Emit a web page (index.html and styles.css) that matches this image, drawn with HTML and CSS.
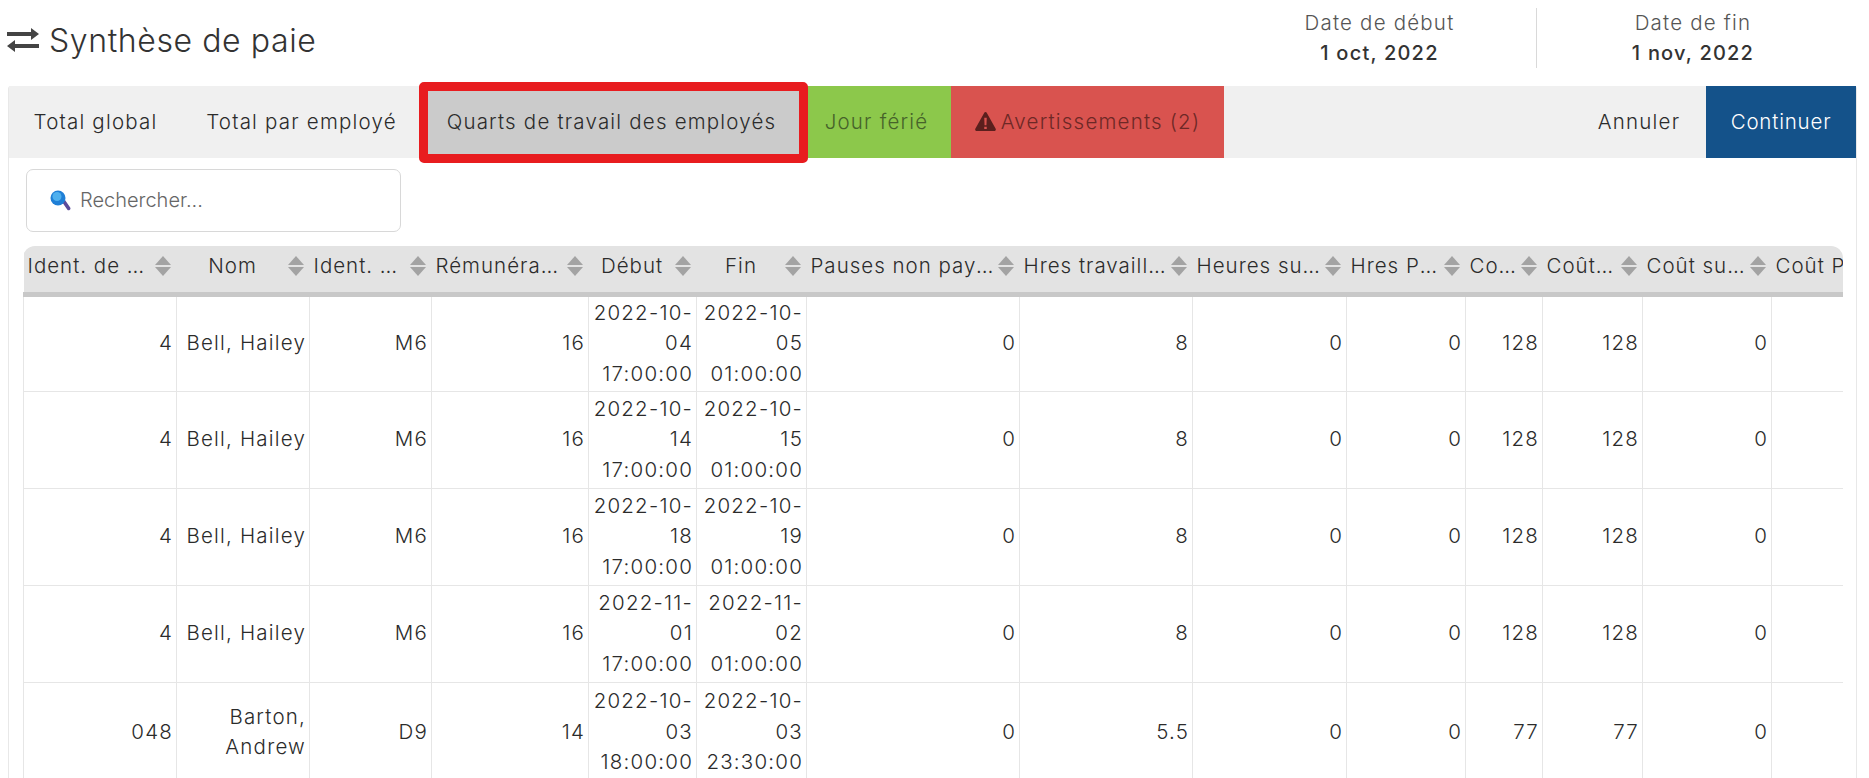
FILE: index.html
```html
<!DOCTYPE html>
<html lang="fr">
<head>
    <meta charset="UTF-8">
    <meta name="viewport" content="width=device-width, initial-scale=1.0">
    <title>Synthèse de paie</title>
    <link rel="stylesheet" href="styles.css">
</head>
<body>
    <header class="page-header">
        <h1 class="page-title">
            <svg class="title-icon" viewBox="0 0 32 24"><path d="M0 4h24V0l8 6-8 6V8H0z M32 16H8v-4l-8 6 8 6v-4h24z"/></svg>
            Synthèse de paie
        </h1>
        <div class="dates">
            <div class="date-block">
                <div class="date-label">Date de début</div>
                <div class="date-value">1 oct, 2022</div>
            </div>
            <div class="date-block date-end">
                <div class="date-label">Date de fin</div>
                <div class="date-value">1 nov, 2022</div>
            </div>
        </div>
    </header>

    <div class="panel">
        <nav class="tabs">
            <div class="tab tab-global">Total global</div>
            <div class="tab tab-employee">Total par employé</div>
            <div class="tab tab-shifts">Quarts de travail des employés</div>
            <div class="tab tab-holiday">Jour férié</div>
            <div class="tab tab-warnings">
                <svg class="warn-icon" viewBox="0 0 20 18"><path d="M10 0c.6 0 1 .3 1.300.8l8.400 15c.5 1-.1 2.200-1.300 2.200H1.600C.4 18-.2 16.800.3 15.800l8.400-15C9 .3 9.400 0 10 0z M8.800 5.500l.3 7h1.800l.3-7z M8.800 14v2.200h2.400V14z" fill-rule="evenodd"/></svg>
                Avertissements (2)
            </div>
            <div class="tab-actions">
                <div class="tab tab-cancel">Annuler</div>
                <div class="tab tab-continue">Continuer</div>
            </div>
        </nav>

        <div class="search-row">
            <div class="search-box">
                <svg class="search-icon" viewBox="0 0 21 21">
                    <path d="M12 12l3-2 5.200 7.500c.6 1 .2 2-.6 2.500-.8.500-1.800.3-2.400-.6z" fill="#5b4b9a"/>
                    <circle cx="8" cy="8" r="7.500" fill="#1f7fd6"/>
                    <circle cx="7" cy="6.500" r="4.500" fill="#4fb0ee"/>
                </svg>
                <span class="search-placeholder">Rechercher...</span>
            </div>
        </div>

        <div class="table-wrap">
            <table class="pay-table">
                <colgroup>
                    <col class="c1"><col class="c2"><col class="c3"><col class="c4"><col class="c5"><col class="c6"><col class="c7">
                    <col class="c8"><col class="c9"><col class="c10"><col class="c11"><col class="c12"><col class="c13"><col class="c14">
                </colgroup>
                <thead>
                    <tr>
                        <th><div class="th-inner"><span class="th-text">Ident. de Employé</span><i class="sort"></i></div></th>
                        <th><div class="th-inner"><span class="th-text center">Nom</span><i class="sort"></i></div></th>
                        <th><div class="th-inner"><span class="th-text">Ident. Du poste</span><i class="sort"></i></div></th>
                        <th><div class="th-inner"><span class="th-text">Rémunération</span><i class="sort"></i></div></th>
                        <th><div class="th-inner"><span class="th-text center">Début</span><i class="sort"></i></div></th>
                        <th><div class="th-inner"><span class="th-text center">Fin</span><i class="sort"></i></div></th>
                        <th><div class="th-inner"><span class="th-text">Pauses non payées</span><i class="sort"></i></div></th>
                        <th><div class="th-inner"><span class="th-text">Hres travaillées</span><i class="sort"></i></div></th>
                        <th><div class="th-inner"><span class="th-text">Heures supp.</span><i class="sort"></i></div></th>
                        <th><div class="th-inner"><span class="th-text">Hres Prime</span><i class="sort"></i></div></th>
                        <th><div class="th-inner"><span class="th-text">Coût total</span><i class="sort"></i></div></th>
                        <th><div class="th-inner"><span class="th-text">Coût régulier</span><i class="sort"></i></div></th>
                        <th><div class="th-inner"><span class="th-text">Coût supp.</span><i class="sort"></i></div></th>
                        <th class="th-last">Coût Prime</th>
                    </tr>
                </thead>
                <tbody>
                    <tr>
                        <td>4</td><td>Bell, Hailey</td><td>M6</td><td>16</td>
                        <td>2022-10-<br>04<br>17:00:00</td><td>2022-10-<br>05<br>01:00:00</td>
                        <td>0</td><td>8</td><td>0</td><td>0</td><td>128</td><td>128</td><td>0</td><td></td>
                    </tr>
                    <tr>
                        <td>4</td><td>Bell, Hailey</td><td>M6</td><td>16</td>
                        <td>2022-10-<br>14<br>17:00:00</td><td>2022-10-<br>15<br>01:00:00</td>
                        <td>0</td><td>8</td><td>0</td><td>0</td><td>128</td><td>128</td><td>0</td><td></td>
                    </tr>
                    <tr>
                        <td>4</td><td>Bell, Hailey</td><td>M6</td><td>16</td>
                        <td>2022-10-<br>18<br>17:00:00</td><td>2022-10-<br>19<br>01:00:00</td>
                        <td>0</td><td>8</td><td>0</td><td>0</td><td>128</td><td>128</td><td>0</td><td></td>
                    </tr>
                    <tr>
                        <td>4</td><td>Bell, Hailey</td><td>M6</td><td>16</td>
                        <td>2022-11-<br>01<br>17:00:00</td><td>2022-11-<br>02<br>01:00:00</td>
                        <td>0</td><td>8</td><td>0</td><td>0</td><td>128</td><td>128</td><td>0</td><td></td>
                    </tr>
                    <tr>
                        <td>048</td><td>Barton,<br>Andrew</td><td>D9</td><td>14</td>
                        <td>2022-10-<br>03<br>18:00:00</td><td>2022-10-<br>03<br>23:30:00</td>
                        <td>0</td><td>5.5</td><td>0</td><td>0</td><td>77</td><td>77</td><td>0</td><td></td>
                    </tr>
                </tbody>
            </table>
        </div>
    </div>
</body>
</html>
```

FILE: styles.css
```css
* {
    margin: 0;
    padding: 0;
    box-sizing: border-box;
}

body, html {
    width: 100%;
    height: 100%;
    overflow: hidden;
    background-color: #fff;
    font-family: Inter, sans-serif;
    font-weight: 300;
    color: #2b2b2b;
}

.page-header {
    display: flex;
    justify-content: space-between;
    height: 86px;
    padding-left: 7px;
    padding-right: 20px;
}

.page-title {
    display: flex;
    align-items: center;
    gap: 10px;
    height: 80px;
    font-size: 32px;
    font-weight: 300;
    letter-spacing: 0.6px;
    color: #333;
}

.title-icon {
    width: 32px;
    height: 24px;
    fill: #444;
}

.dates {
    display: flex;
    padding-top: 8px;
    height: 68px;
}

.date-block {
    width: 313px;
    height: 60px;
    text-align: center;
    letter-spacing: 1.2px;
}

.date-end {
    border-left: 1px solid #d9d9d9;
}

.date-label {
    font-size: 20.5px;
    line-height: 30px;
    color: #555;
}

.date-value {
    font-size: 20px;
    font-weight: 500;
    line-height: 30px;
    color: #333;
}

.panel {
    margin: 0 12px 0 8px;
    height: 700px;
    border: 1px solid #e8e8e8;
    border-top: none;
    border-radius: 3px;
}

.tabs {
    display: flex;
    height: 72px;
    background-color: #f0f0f0;
    font-size: 20.5px;
    letter-spacing: 1.2px;
}

.tab {
    display: flex;
    align-items: center;
    justify-content: center;
    gap: 5px;
    padding-bottom: 2px;
    color: #2b2b2b;
    white-space: nowrap;
}

.tab-global { width: 173px; }
.tab-employee { width: 239px; }

.tab-shifts {
    position: relative;
    width: 381px;
    background-color: #cbcbcb;
}

/* red annotation drawn over the screenshot */
.tab-shifts::after {
    content: "";
    position: absolute;
    top: -4px;
    left: -2px;
    right: -6px;
    bottom: -5px;
    border: 9px solid #e81c1f;
    border-radius: 5px;
}

.tab-holiday {
    width: 149px;
    background-color: #8cc84b;
    color: #46632a;
}

.tab-warnings {
    width: 273px;
    background-color: #d9534f;
    color: #6d2826;
}

.warn-icon {
    width: 21px;
    height: 19px;
    fill: #5b1f1d;
}

.tab-actions {
    display: flex;
    margin-left: auto;
}

.tab-cancel { width: 150px; padding-left: 16px; }

.tab-continue {
    width: 150px;
    background-color: #14528a;
    color: #fff;
    letter-spacing: 0.8px;
}

.search-row {
    padding: 11px 0 14px 17px;
}

.search-box {
    display: flex;
    align-items: center;
    gap: 9px;
    width: 375px;
    height: 63px;
    padding-left: 23px;
    border: 1px solid #d8d8d8;
    border-radius: 7px;
    background-color: #fff;
}

.search-icon {
    width: 21px;
    height: 21px;
}

.search-placeholder {
    margin-bottom: 2px;
    font-size: 20px;
    color: #666;
}

.table-wrap {
    margin-left: 14px;
    width: 1820px;
    overflow: hidden;
    border-radius: 12px 12px 0 0;
}

.pay-table {
    width: 1820px;
    table-layout: fixed;
    border-collapse: collapse;
    font-size: 20.5px;
    letter-spacing: 1.2px;
}

.c1 { width: 153px; }
.c2 { width: 133px; }
.c3 { width: 122px; }
.c4 { width: 157px; }
.c5 { width: 108px; }
.c6 { width: 110px; }
.c7 { width: 213px; }
.c8 { width: 173px; }
.c9 { width: 154px; }
.c10 { width: 119px; }
.c11 { width: 77px; }
.c12 { width: 100px; }
.c13 { width: 129px; }
.c14 { width: 72px; }

.pay-table thead {
    background-color: #e3e3e3;
}

.pay-table th {
    height: 48px;
    padding: 0 0 7px 4px;
    border-bottom: 5px solid #c8c8c8;
    font-weight: 300;
    letter-spacing: 1px;
    text-align: left;
    white-space: nowrap;
    overflow: hidden;
}

.th-inner {
    display: flex;
    align-items: center;
    gap: 3px;
    padding-right: 5px;
}

.th-text {
    flex: 1;
    min-width: 0;
    overflow: hidden;
    text-overflow: ellipsis;
}

.th-text.center {
    text-align: center;
}

.sort {
    flex: none;
    display: flex;
    flex-direction: column;
    gap: 2px;
    width: 17px;
    margin-top: 1px;
}

.sort::before, .sort::after {
    content: "";
    width: 0;
    height: 0;
    border-left: 8.5px solid transparent;
    border-right: 8.5px solid transparent;
}

.sort::before {
    border-bottom: 9px solid #a3a3a3;
}

.sort::after {
    border-top: 9px solid #a3a3a3;
}

.pay-table td {
    height: 97px;
    padding: 0 3px 0 4px;
    border: 1px solid #e6e6e6;
    border-top: none;
    line-height: 30.5px;
    text-align: right;
}

.pay-table tr:last-child td {
    padding-top: 3px;
}
```
